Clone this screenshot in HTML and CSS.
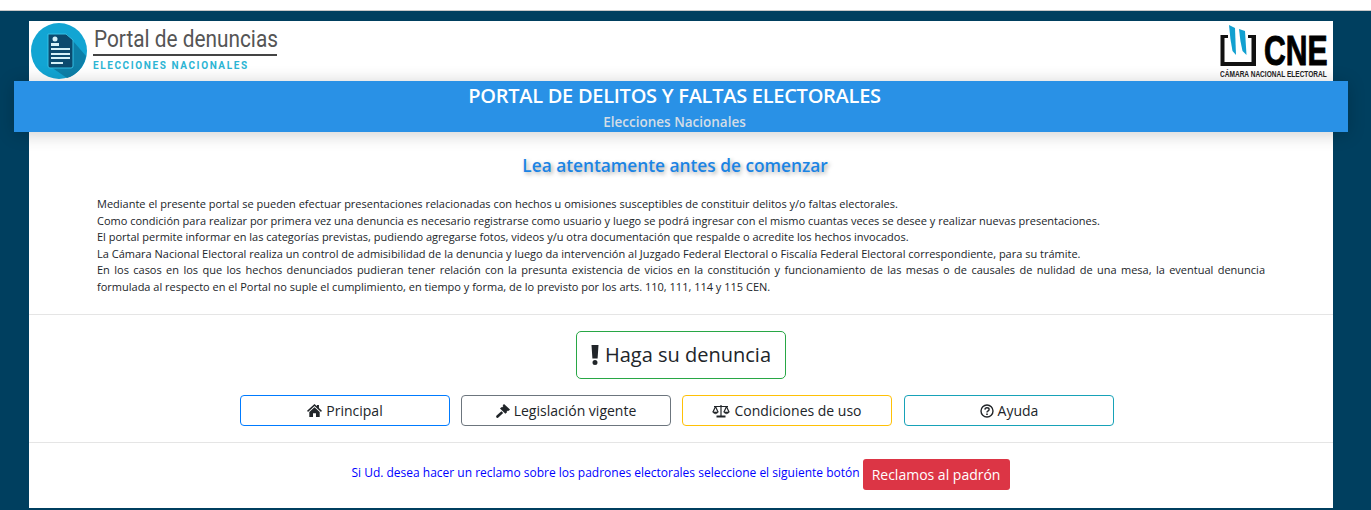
FILE: index.html
```html
<!DOCTYPE html>
<html lang="es">
<head>
    <meta charset="UTF-8">
    <title>Portal de denuncias</title>
    <link rel="stylesheet" href="styles.css">
</head>
<body>
    <div class="page">
        <div class="container">
            <header class="top">
                <div class="logo">
                    <svg class="logo-badge" viewBox="0 0 56 56" width="56" height="56">
                        <circle cx="28" cy="28" r="28" fill="#12a5d3"/>
                        <path d="M17 14 L36 11 L55 33 A28 28 0 0 1 36 55 L17 42 Z" fill="#0d7fa8"/>
                        <path d="M17 11 H35 L42 17 V43 Q42 45 40 45 H19 Q17 45 17 43 Z" fill="#0b4a6e" stroke="#35c0e4" stroke-width="1"/>
                        <circle cx="24" cy="16" r="2.5" fill="#d5f1f8"/>
                        <rect x="20" y="20" width="8" height="3" fill="#d5f1f8"/>
                        <rect x="20" y="25" width="19" height="2" fill="#d5f1f8"/>
                        <rect x="20" y="30" width="19" height="2" fill="#d5f1f8"/>
                        <rect x="20" y="34" width="19" height="2" fill="#d5f1f8"/>
                        <rect x="20" y="39" width="12" height="2" fill="#d5f1f8"/>
                    </svg>
                    <div class="logo-text">
                        <div class="logo-title"><span>Portal de denuncias</span></div>
                        <div class="logo-sub">ELECCIONES NACIONALES</div>
                    </div>
                </div>
                <div class="cne">
                    <div class="cne-row">
                        <svg viewBox="0 0 36 42" width="36" height="42">
                            <path d="M0.5 10 H8 V13 H4.5 V37 H31.5 V13 H28 V10 H36 V41 H0.5 Z" fill="#111"/>
                            <path d="M9 0 L15 3 L16 30 L12.5 26 Q10 14 9 0 Z" fill="#12a0d0"/>
                            <path d="M19 4 L25 6 L26.5 30 L22.5 26 Q20 16 19 4 Z" fill="#12a0d0"/>
                        </svg>
                        <span class="cne-word">CNE</span>
                    </div>
                    <div class="cne-name"><span>CÁMARA NACIONAL ELECTORAL</span></div>
                </div>
            </header>

            <section class="banner">
                <h1>PORTAL DE DELITOS Y FALTAS ELECTORALES</h1>
                <p>Elecciones Nacionales</p>
            </section>

            <section class="intro">
                <h2>Lea atentamente antes de comenzar</h2>
                <div class="intro-text">
                    <p>Mediante el presente portal se pueden efectuar presentaciones relacionadas con hechos u omisiones susceptibles de constituir delitos y/o faltas electorales.</p>
                    <p>Como condición para realizar por primera vez una denuncia es necesario registrarse como usuario y luego se podrá ingresar con el mismo cuantas veces se desee y realizar nuevas presentaciones.</p>
                    <p>El portal permite informar en las categorías previstas, pudiendo agregarse fotos, videos y/u otra documentación que respalde o acredite los hechos invocados.</p>
                    <p>La Cámara Nacional Electoral realiza un control de admisibilidad de la denuncia y luego da intervención al Juzgado Federal Electoral o Fiscalía Federal Electoral correspondiente, para su trámite.</p>
                    <p>En los casos en los que los hechos denunciados pudieran tener relación con la presunta existencia de vicios en la constitución y funcionamiento de las mesas o de causales de nulidad de una mesa, la eventual denuncia formulada al respecto en el Portal no suple el cumplimiento, en tiempo y forma, de lo previsto por los arts. 110, 111, 114 y 115 CEN.</p>
                </div>
            </section>

            <section class="actions">
                <a class="btn btn-big" href="#">
                    <svg viewBox="0 0 8 20" width="8" height="20"><path d="M0.5 0 H7.5 L6.6 13.5 H1.4 Z M4 15 A2.5 2.5 0 1 1 4 20 A2.5 2.5 0 1 1 4 15 Z" fill="#212529"/></svg>
                    Haga su denuncia
                </a>
                <div class="btn-row">
                    <a class="btn btn-blue" href="#">
                        <svg viewBox="0 0 16 14" width="15" height="13"><path d="M8 0 L10.6 2.4 V1 H12.8 V4.4 L16 7.4 L15 8.5 L8 2.2 L1 8.5 L0 7.4 Z M8 3.6 L13.6 8.6 V14 H9.6 V10 H6.4 V14 H2.4 V8.6 Z" fill="#212529"/></svg>
                        Principal
                    </a>
                    <a class="btn btn-gray" href="#">
                        <svg viewBox="0 0 14 14" width="14" height="14"><path d="M8 0 L14 5.5 L12.6 7 L12 6.4 L10.6 7.8 L11 8.3 L9.4 9.8 L4 4.6 L5.6 3 L6 3.4 L7.4 2 L6.6 1.4 Z M5.4 7.2 L7.2 9 L2.4 13.6 Q1.4 14.4 0.5 13.4 Q-0.3 12.5 0.6 11.6 Z" fill="#212529"/></svg>
                        Legislación vigente
                    </a>
                    <a class="btn btn-yellow" href="#">
                        <svg viewBox="0 0 18 14" width="18" height="14" fill="none" stroke="#212529"><path d="M9 1 V12.5 M2 2.5 H16 M3.5 2.5 L1 8 M3.5 2.5 L6 8 M14.5 2.5 L12 8 M14.5 2.5 L17 8" stroke-width="1.2"/><path d="M4.5 12.5 H13.5" stroke-width="2"/><path d="M0.6 8 H6.4 Q3.5 11.5 0.6 8 Z M11.6 8 H17.4 Q14.5 11.5 11.6 8 Z" fill="#212529" stroke-width="0.6"/></svg>
                        Condiciones de uso
                    </a>
                    <a class="btn btn-teal" href="#">
                        <svg viewBox="0 0 14 14" width="14" height="14" fill="none" stroke="#212529"><circle cx="7" cy="7" r="6" stroke-width="1.4"/><path d="M4.9 5.6 Q5 3.7 7 3.7 Q9.1 3.7 9.1 5.4 Q9.1 6.4 7.9 7 Q7 7.5 7 8.4" stroke-width="1.4"/><path d="M7 9.4 V11" stroke-width="1.6"/></svg>
                        Ayuda
                    </a>
                </div>
            </section>

            <section class="claim">
                <span class="claim-text">Si Ud. desea hacer un reclamo sobre los padrones electorales seleccione el siguiente botón</span>
                <a class="btn-red" href="#">Reclamos al padrón</a>
            </section>
        </div>
    </div>
</body>
</html>
```

FILE: styles.css
```css
* {
    box-sizing: border-box;
    margin: 0;
    padding: 0;
}

body {
    background-color: #fff;
    color: #212529;
    font-family: "Open Sans", sans-serif;
    font-size: 14px;
    line-height: 1.5;
    overflow: hidden;
}

.page {
    margin-top: 10px;
    height: 500px;
    padding: 10px 38px 0 29px;
    background-color: #003f5f;
    border-top: 1px solid #c8c8c8;
}

.container {
    background-color: #fff;
    height: 487px;
}

/* header */
.top {
    display: flex;
    justify-content: space-between;
    height: 60px;
    padding: 2px 6px 0 2px;
}

.logo {
    display: flex;
}

.logo-text {
    margin-left: 6px;
    width: 184px;
}

.logo-title {
    font-family: "Roboto", sans-serif;
    font-weight: 400;
    font-size: 23px;
    line-height: 30px;
    white-space: nowrap;
    color: #555;
    border-bottom: 2px solid #444;
    margin-top: 2px;
    height: 31px;
}

.logo-title span {
    display: inline-block;
    margin-left: 1px;
    transform: scaleX(0.905);
    transform-origin: left;
}

.logo-sub {
    font-family: "Roboto", sans-serif;
    font-weight: 700;
    font-size: 10px;
    line-height: 16px;
    margin-top: 2px;
    letter-spacing: 1.6px;
    color: #2cb5d4;
}

.cne {
    width: 107px;
    padding-top: 2px;
}

.cne-row {
    display: flex;
    height: 42px;
}

.cne-row svg {
    flex: none;
}

.cne-word {
    display: block;
    width: 63px;
    font-family: "Liberation Sans", sans-serif;
    font-weight: 700;
    font-size: 43px;
    line-height: 31px;
    margin: 10px 0 0 8px;
    color: #000;
    transform: scaleX(0.7);
    transform-origin: left;
    -webkit-text-stroke: 1px #000;
}

.cne-name {
    font-family: "Liberation Sans", sans-serif;
    font-weight: 700;
    font-size: 8.5px;
    line-height: 9px;
    white-space: nowrap;
    color: #222;
    margin-top: 3px;
}

.cne-name span {
    display: inline-block;
    transform: scaleX(0.77);
    transform-origin: left;
}

/* blue band, wider than the white sheet */
.banner {
    position: relative;
    margin: 0 -15px;
    height: 51px;
    padding-right: 13px;
    background-color: #2991e6;
    text-align: center;
    box-shadow: 0 2px 18px rgba(0, 0, 0, 0.2);
}

.banner h1 {
    font-size: 20px;
    font-weight: 600;
    line-height: 30px;
    letter-spacing: -0.27px;
    color: #fff;
}

.banner p {
    font-size: 13.5px;
    font-weight: 600;
    line-height: 20px;
    margin-top: 1px;
    color: #d3dde6;
}

.intro {
    padding: 22px 68px 0;
    height: 183px;
    border-bottom: 1px solid #e5e5e5;
}

.intro h2 {
    text-align: center;
    margin-right: -1px;
    padding-right: 13px;
    font-size: 17.3px;
    font-weight: 600;
    line-height: 24px;
    color: #1a84e4;
    text-shadow: 2px 2px 4px rgba(0, 0, 0, 0.35);
}

.intro-text {
    margin-top: 18px;
    font-size: 11px;
    line-height: 16.6px;
    text-align: justify;
}

/* buttons */
.actions {
    height: 128px;
    padding-top: 16px;
    border-bottom: 1px solid #e5e5e5;
    display: flex;
    flex-direction: column;
    align-items: center;
}

.btn {
    display: flex;
    align-items: center;
    justify-content: center;
    gap: 4px;
    width: 210px;
    height: 31px;
    border: 1px solid;
    border-radius: 4px;
    color: #212529;
    text-decoration: none;
}

.btn-big {
    height: 48px;
    font-size: 20px;
    gap: 6px;
    border-color: #28a745;
    border-radius: 5px;
}

.btn-row {
    display: flex;
    gap: 11px;
    margin-top: 16px;
    margin-right: 8px;
}

.btn-blue { border-color: #007bff; }
.btn-gray { border-color: #6c757d; }
.btn-yellow { border-color: #ffc107; }
.btn-teal { border-color: #17a2b8; margin-left: 1px; }

.claim {
    display: flex;
    justify-content: center;
    padding-top: 16px;
    padding-right: 1px;
}

.claim-text {
    font-size: 12px;
    line-height: 28px;
    color: #0000ff;
}

.btn-red {
    margin-left: 3px;
    height: 31px;
    width: 147px;
    line-height: 31px;
    text-align: center;
    border-radius: 3px;
    background-color: #dc3545;
    color: #fff;
    text-decoration: none;
}
```
